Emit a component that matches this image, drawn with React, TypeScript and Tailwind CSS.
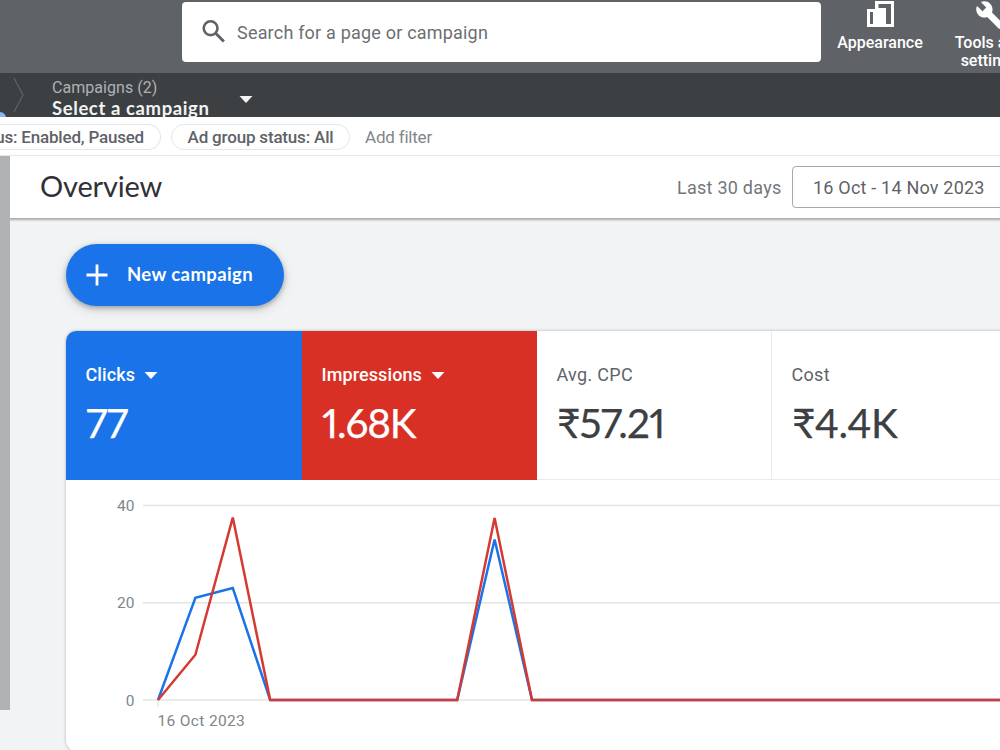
import type { ReactNode } from "react"
import clsx from "clsx"

type TMetric = {
  label: string
  value: string
  className: string
  labelClassName: string
  valueClassName: string
  hasMenu?: boolean
}

const METRICS: TMetric[] = [
  {
    label: "Clicks",
    value: "77",
    className: "bg-[#1a73e8] text-white",
    labelClassName: "font-medium tracking-[0.1px]",
    valueClassName: "tracking-[-0.8px]",
    hasMenu: true,
  },
  {
    label: "Impressions",
    value: "1.68K",
    className: "bg-[#d93025] text-white",
    labelClassName: "font-medium tracking-[0.1px]",
    valueClassName: "tracking-[-1.1px]",
    hasMenu: true,
  },
  {
    label: "Avg. CPC",
    value: "₹57.21",
    className: "bg-white text-[#3c4043] border-r border-b border-[#e8eaed]",
    labelClassName: "tracking-[0.3px] text-[#5f6368]",
    valueClassName: "tracking-[-0.85px]",
  },
  {
    label: "Cost",
    value: "₹4.4K",
    className: "bg-white text-[#3c4043] border-b border-[#e8eaed]",
    labelClassName: "tracking-[0.3px] text-[#5f6368]",
    valueClassName: "tracking-[-0.6px]",
  },
]

const CLICKS = [0, 21, 23, 0, 0, 0, 0, 0, 0, 33, 0, 0, 0, 0, 0, 0, 0, 0, 0, 0, 0, 0, 0, 0]
const IMPRESSIONS = [0, 9.3, 37.5, 0, 0, 0, 0, 0, 0, 37.4, 0, 0, 0, 0, 0, 0, 0, 0, 0, 0, 0, 0, 0, 0]

const BASELINE = 220
const STEP = 37.4
const START = 92

const toPoints = (values: number[]) =>
  values.map((value, index) => `${START + index * STEP},${BASELINE - value * 4.865}`).join(" ")

const Caret = ({ className }: { className?: string }) => (
  <svg className={className} width="14" height="7" viewBox="0 0 14 7" fill="currentColor">
    <path d="M0.5 0h13L7 7z" />
  </svg>
)

const HeaderAction = ({ icon, children, className }: { icon: ReactNode; children: ReactNode; className: string }) => (
  <div className={clsx("flex flex-col items-center shrink-0 text-center text-[16px] leading-[18px] font-medium text-white whitespace-nowrap", className)}>
    {icon}
    {children}
  </div>
)

const Header = () => (
  <header className="flex h-[73px] shrink-0 bg-[#5f6368] pl-[182px]">
    <div className="mt-[2px] flex h-[60px] w-[639px] shrink-0 items-center rounded bg-white pl-[20px]">
      <svg width="24" height="24" viewBox="0 0 24 24" fill="none" stroke="#5f6368" strokeWidth="2.6">
        <circle cx="8.6" cy="8.2" r="6.9" />
        <path d="M13.6 13.2l8.3 8.3" strokeWidth="3" />
      </svg>
      <span className="ml-[11px] whitespace-nowrap text-[18px] tracking-[0.2px] text-[#6b6f73]">Search for a page or campaign</span>
    </div>
    <HeaderAction
      className="ml-[16px] w-[86px]"
      icon={
        <svg className="mt-[1px] mb-[7px]" width="27" height="26" viewBox="0 0 27 26" fill="white">
          <path fillRule="evenodd" d="M0 8h8V0h19v26H0zM3 11v12h3V11zM11.500 3v4H19v16h5V3z" />
        </svg>
      }
    >
      <span>Appearance</span>
    </HeaderAction>
    <HeaderAction
      className="ml-[24px] w-[85px]"
      icon={
        <svg className="mb-[4px] ml-[1px]" width="30" height="30" viewBox="0 0 24 24" fill="white">
          <path d="M22.7 19l-9.100-9.100c.9-2.300.4-5-1.500-6.900-2-2-5-2.400-7.400-1.300L9 6 6 9 1.600 4.700C.4 7.100.9 10.100 2.900 12.100c1.900 1.900 4.600 2.400 6.900 1.500l9.100 9.100c.4.4 1 .4 1.400 0l2.300-2.300c.5-.4.5-1.100.1-1.400z" />
        </svg>
      }
    >
      <span>Tools and</span>
      <span>settings</span>
    </HeaderAction>
  </header>
)

const CampaignBar = () => (
  <div className="flex h-[44px] shrink-0 overflow-hidden bg-[#3c4043]">
    <div className="h-[10px] w-[6px] mt-[39px] rounded-tr-md bg-[#8ab4f8]" />
    <svg className="ml-[7px] mt-[4px]" width="12" height="36" viewBox="0 0 12 36" fill="none" stroke="#5f6368" strokeWidth="1.200">
      <path d="M1 1l9 17-9 17" />
    </svg>
    <div className="ml-[27px] flex w-[187px] flex-col whitespace-nowrap">
      <span className="mt-[5px] text-[16px] leading-[20px] tracking-[0.05px] text-[#aeb2b6]">Campaigns (2)</span>
      <span className="-mt-[1px] font-['Lato',sans-serif] text-[18.5px] leading-[22px] font-bold tracking-[0.6px] text-[#f1f3f4]">Select a campaign</span>
    </div>
    <Caret className="mt-[23px] text-[#f1f3f4]" />
  </div>
)

const FilterBar = () => (
  <div className="flex h-[39px] shrink-0 items-center overflow-hidden border-b border-[#e4e6e8] bg-white pt-[2px] text-[17px] whitespace-nowrap text-[#5f6368]">
    <div className="flex h-[26px] w-[161px] shrink-0 items-center justify-end rounded-r-full border border-l-0 border-[#e4e6e8] pt-[1px] pr-[16px] font-medium tracking-[-0.2px]">
      <span>Status: Enabled, Paused</span>
    </div>
    <div className="ml-[10px] flex h-[26px] w-[179px] items-center justify-center rounded-full border border-[#e4e6e8] pt-[1px] font-medium tracking-[-0.18px]">
      Ad group status: All
    </div>
    <span className="ml-[15px] pt-[1px] tracking-[-0.2px] text-[#80868b]">Add filter</span>
  </div>
)

const Chart = () => (
  <svg className="block shrink-0" width="935" height="270" viewBox="0 0 935 270">
    {[40, 20, 0].map((tick) => (
      <g key={tick}>
        <path d={`M77 ${BASELINE - tick * 4.865}H935`} stroke="#e4e4e4" strokeWidth="1.500" />
        <text x="68.500" y={BASELINE - tick * 4.865 + 5.5} textAnchor="end" fontSize="15.500" fill="#80868b">{tick}</text>
      </g>
    ))}
    <path d="M92 220v7" stroke="#dadce0" />
    <polyline points={toPoints(CLICKS)} fill="none" stroke="#1a73e8" strokeWidth="2.500" />
    <polyline points={toPoints(IMPRESSIONS)} fill="none" stroke="#d43a31" strokeWidth="2.500" />
    <text x="91.500" y="245.500" fontSize="15.500" letterSpacing="0.350" fill="#80868b">16 Oct 2023</text>
  </svg>
)

const MetricCell = ({ metric }: { metric: TMetric }) => (
  <div className={clsx("flex flex-col pl-[20px] pt-[32px] whitespace-nowrap", metric.className)}>
    <div className={clsx("-ml-[0.5px] flex items-center text-[18px] leading-[24px]", metric.labelClassName)}>
      <span>{metric.label}</span>
      {metric.hasMenu && <Caret className="ml-[9px]" />}
    </div>
    <span className={clsx("mt-[11px] font-['Lato','Noto_Sans',sans-serif] text-[40.5px] leading-[50px] proportional-nums [-webkit-text-stroke:0.25px]", metric.valueClassName)}>
      {metric.value}
    </span>
  </div>
)

const App = () => {
  return (
    <div className="flex h-[750px] w-[1000px] flex-col overflow-hidden bg-[#f1f3f4] font-['Roboto',sans-serif]">
      <Header />
      <CampaignBar />
      <FilterBar />
      <div className="flex flex-1">
        <div className="h-[554px] w-[10px] shrink-0 bg-[#b1b2b4]" />
        <main className="flex w-[990px] flex-col overflow-hidden">
          <div className="flex h-[62px] shrink-0 items-center bg-white pl-[30px] whitespace-nowrap shadow-[0_1px_2px_1px_rgba(60,64,67,0.4)]">
            <h1 className="w-[637px] shrink-0 -mt-[2px] font-['Lato',sans-serif] text-[29px] tracking-[-0.15px] text-[#303134]">Overview</h1>
            <span className="w-[115px] shrink-0 text-[18px] tracking-[0.25px] text-[#73777b]">Last 30 days</span>
            <div className="flex h-[42px] w-[260px] shrink-0 items-center rounded border border-[#a5a9ad] pl-[20px] text-[18px] tracking-[0.2px] text-[#5f6368]">
              16 Oct - 14 Nov 2023
            </div>
          </div>
          <button className="mt-[26px] ml-[56px] flex h-[62px] w-[218px] shrink-0 items-center rounded-full bg-[#1a73e8] pl-[20px] text-white shadow-[0_2px_5px_rgba(60,64,67,0.4),0_4px_12px_rgba(60,64,67,0.15)]">
            <svg width="22" height="22" viewBox="0 0 22 22" stroke="white" strokeWidth="2.800">
              <path d="M11 0.500v21M0.500 11h21" />
            </svg>
            <span className="ml-[19px] whitespace-nowrap font-['Lato',sans-serif] text-[18.5px] font-bold tracking-[0.4px]">New campaign</span>
          </button>
          <section className="mt-[25px] ml-[56px] h-[420px] w-[960px] shrink-0 overflow-hidden rounded-[10px] bg-white shadow-[0_0_3px_rgba(60,64,67,0.4)]">
            <div className="grid h-[149px] grid-cols-[236px_235px_235px_260px]">
              {METRICS.map((metric) => (
                <MetricCell key={metric.label} metric={metric} />
              ))}
            </div>
            <Chart />
          </section>
        </main>
      </div>
    </div>
  )
}

export default App
